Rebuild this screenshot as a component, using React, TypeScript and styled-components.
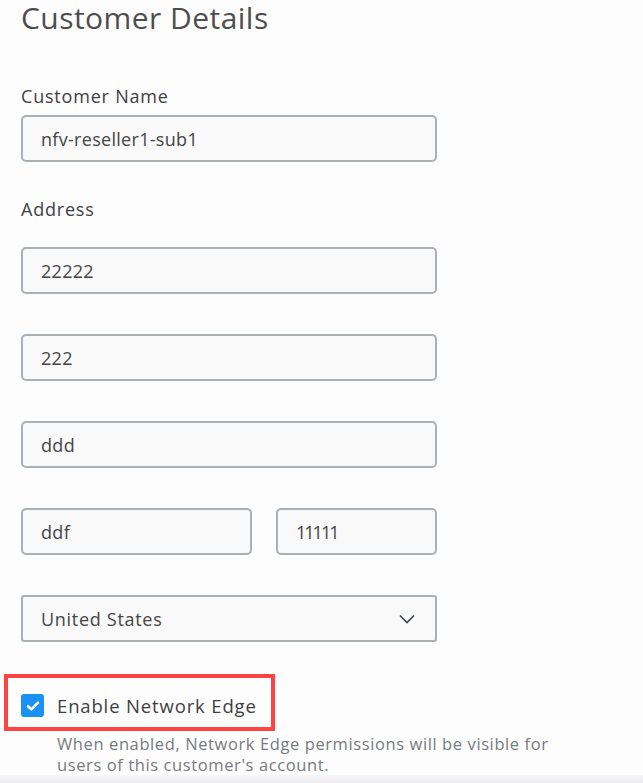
import styled, { createGlobalStyle } from 'styled-components';

const GlobalStyle = createGlobalStyle`
    html, body {
        margin: 0;
        padding: 0;
        background: #fdfdfd;
    }
    body {
        font-family: "Open Sans", "Liberation Sans", sans-serif;
        color: #4a4a4a;
    }
`;

const ChevronDown = () => (
    <svg width="16" height="10" viewBox="0 0 16 10" fill="none">
        <path d="M1 1.5 L8 8.5 L15 1.5" stroke="#3d4450" strokeWidth="1.6" />
    </svg>
);

const CheckMark = () => (
    <svg width="14" height="12" viewBox="0 0 14 12" fill="none">
        <path d="M2 6.2 L5.4 9.4 L12 2.6" stroke="#fff" strokeWidth="2.6" strokeLinecap="round" strokeLinejoin="round" />
    </svg>
);

const App = () => {
    return (
        <Page>
            <GlobalStyle />
            <Title>Customer Details</Title>

            <Label>Customer Name</Label>
            <Field value="nfv-reseller1-sub1" />

            <Label $gap>Address</Label>
            <FieldStack>
                <Field value="22222" />
                <Field value="222" />
                <Field value="ddd" />
                <SplitRow>
                    <Field value="ddf" />
                    <Field value="11111" />
                </SplitRow>
                <Select>
                    <span>United States</span>
                    <ChevronDown />
                </Select>
            </FieldStack>

            <Highlight>
                <CheckBox>
                    <CheckMark />
                </CheckBox>
                <CheckLabel>Enable Network Edge</CheckLabel>
            </Highlight>
            <Help>
                When enabled, Network Edge permissions will be visible for
                <br />
                users of this customer's account.
            </Help>
            <BottomShade />
        </Page>
    );
};

const Field = ({ value }: { value: string }) => <Input readOnly value={value} />;

const Page = styled.div`
    width: 643px;
    height: 783px;
    box-sizing: border-box;
    padding: 0 0 0 21px;
    display: flex;
    flex-direction: column;
    overflow: hidden;
    position: relative;
`;

const Title = styled.h1`
    margin: 0;
    font-size: 30px;
    line-height: 36px;
    font-weight: 400;
    color: #4d4d4d;
    letter-spacing: 0.45px;
`;

const Label = styled.div<{ $gap?: boolean }>`
    margin-top: ${(p) => (p.$gap ? '35px' : '48px')};
    font-size: 18px;
    line-height: 24px;
    color: #404040;
    letter-spacing: 0.8px;
`;

const Input = styled.input`
    box-sizing: border-box;
    width: 416px;
    height: 47px;
    margin-top: 7px;
    padding: 0 18px;
    border: 2px solid #a9b0b8;
    border-radius: 5px;
    background: #f9f9f9;
    font-family: inherit;
    font-size: 18px;
    letter-spacing: 0.3px;
    color: #454545;
    outline: none;
`;

const FieldStack = styled.div`
    display: flex;
    flex-direction: column;
    gap: 40px;
    margin-top: 26px;

    ${Input} {
        margin-top: 0;
    }
`;

const SplitRow = styled.div`
    display: flex;
    gap: 24px;
    width: 416px;

    ${Input}:first-child {
        width: 231px;
    }
    ${Input}:last-child {
        width: 161px;
        letter-spacing: -2px;
    }
`;

const Select = styled.div`
    box-sizing: border-box;
    width: 416px;
    height: 47px;
    padding: 0 20px 0 18px;
    display: flex;
    align-items: center;
    justify-content: space-between;
    border: 2px solid #a9b0b8;
    border-radius: 3px;
    background: #f9f9f9;
    font-size: 18px;
    letter-spacing: 0.7px;
    color: #454545;
`;

const Highlight = styled.div`
    box-sizing: border-box;
    margin: 32px 0 0 -17px;
    width: 271px;
    height: 57px;
    padding: 6px 0 0 13px;
    border: 4px solid #ff4343;
    display: flex;
    align-items: center;
    gap: 13px;
`;

const CheckBox = styled.span`
    width: 23px;
    height: 23px;
    border-radius: 3px;
    background: #1b90f5;
    display: flex;
    align-items: center;
    justify-content: center;
    flex-shrink: 0;
`;

const CheckLabel = styled.span`
    font-size: 18.5px;
    color: #3f3f3f;
    letter-spacing: 0.85px;
`;

const Help = styled.div`
    margin: 2px 0 0 36px;
    font-size: 16.5px;
    line-height: 21px;
    color: #777a80;
    letter-spacing: 0.6px;
`;

const BottomShade = styled.div`
    position: absolute;
    left: 0;
    right: 0;
    bottom: 0;
    height: 8px;
    background: linear-gradient(#f7f7f8, #ebebee);
`;

export default App;
